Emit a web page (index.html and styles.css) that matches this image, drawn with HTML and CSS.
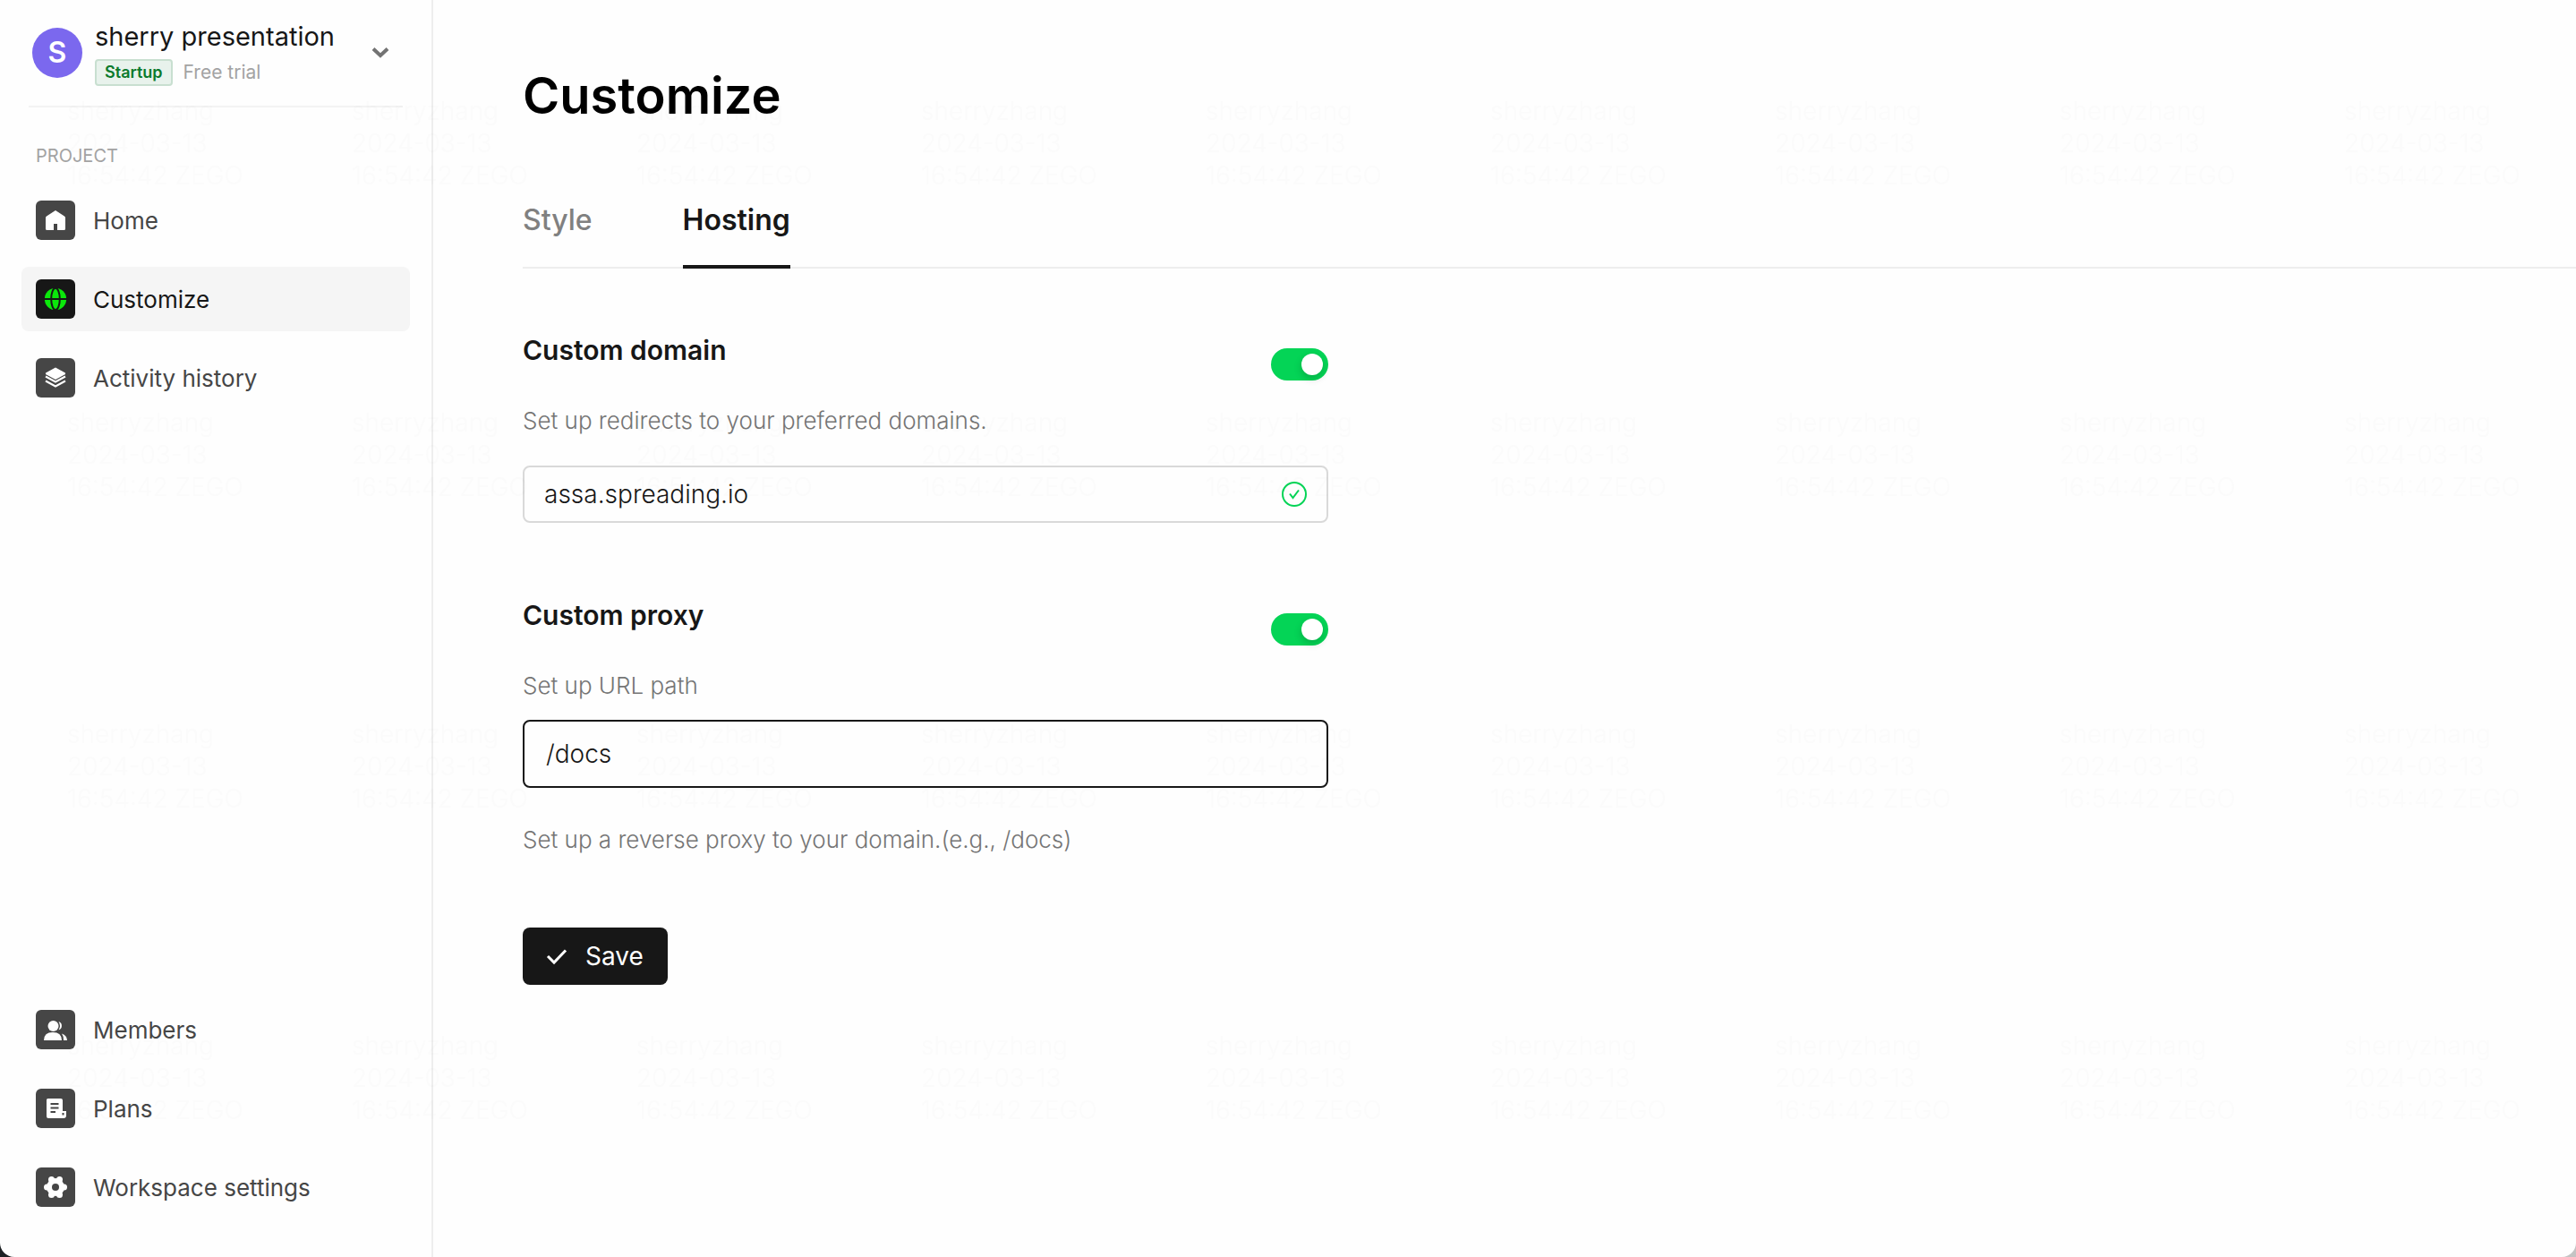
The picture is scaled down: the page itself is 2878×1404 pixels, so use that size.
FILE: index.html
```html
<!DOCTYPE html>
<html lang="en">
<head>
<meta charset="utf-8">
<title>Customize</title>
<link rel="stylesheet" href="styles.css">
</head>
<body>
<div class="app">
  <aside class="sidebar">
    <button class="workspace" type="button">
      <span class="avatar">S</span>
      <span class="workspace-info">
        <span class="workspace-name">sherry presentation</span>
        <span class="workspace-plan"><span class="badge">Startup</span><span class="trial">Free trial</span></span>
      </span>
      <svg class="chevron" viewBox="0 0 20 20" aria-hidden="true"><path d="M2 5.500 10 13 18 5.500"/></svg>
    </button>
    <p class="group-label">PROJECT</p>
    <nav class="nav">
      <a class="nav-item" href="#home">
        <svg class="tile" viewBox="0 0 44 44" aria-hidden="true"><path d="M22 11 32 17.500Q33 18.200 33 19.500V31.500Q33 33 31.500 33H24V26H20V33H12.500Q11 33 11 31.500V19.500Q11 18.200 12 17.500Z"/></svg>
        Home</a>
      <a class="nav-item active" href="#customize">
        <svg class="tile" viewBox="0 0 44 44" aria-hidden="true"><circle cx="22" cy="22" r="12.200"/><g class="cut"><ellipse cx="22" cy="22" rx="4.800" ry="12.200"/><path d="M9 22H35"/></g></svg>
        Customize</a>
      <a class="nav-item" href="#activity">
        <svg class="tile" viewBox="0 0 44 44" aria-hidden="true"><path d="M22 10.500 33 16.500V18L22 24 11 18V16.500Z"/><path class="line" d="M11 20.500 22 26.500 33 20.500M11 25.500 22 31.500 33 25.500"/></svg>
        Activity history</a>
    </nav>
    <nav class="nav nav-bottom">
      <a class="nav-item" href="#members">
        <svg class="tile" viewBox="0 0 44 44" aria-hidden="true"><circle cx="19.500" cy="18" r="6"/><path d="M9 34Q9 25 19 25 29 25 29 34ZM25.500 13A5 5 0 0 1 25.500 22.500 9 9 0 0 0 25.500 13ZM29 26.500Q35 28.500 35 34H31Q31.500 30 29 26.500Z"/></svg>
        Members</a>
      <a class="nav-item" href="#plans">
        <svg class="tile" viewBox="0 0 44 44" aria-hidden="true"><path d="M13.500 11H28Q30 11 30 13V25H34V30Q34 33 31 33H14Q12 33 12 31V12.500Q12 11 13.500 11Z"/><path class="cut" d="M16.500 17H25.500M16.500 21.500H25.500M16.500 26H22"/><path class="cut" d="M30.500 27V29.500"/></svg>
        Plans</a>
      <a class="nav-item" href="#settings">
        <svg class="tile" viewBox="0 0 44 44" aria-hidden="true"><circle cx="22" cy="22" r="10"/><g><circle cx="31.500" cy="22" r="3.500"/><circle cx="26.500" cy="13.500" r="3.500"/><circle cx="17.500" cy="13.500" r="3.500"/><circle cx="12.500" cy="22" r="3.500"/><circle cx="17.500" cy="30.500" r="3.500"/><circle cx="26.500" cy="30.500" r="3.500"/></g><circle class="hole" cx="22" cy="22" r="4"/></svg>
        Workspace settings</a>
    </nav>
  </aside>

  <main class="main">
    <h1 class="title">Customize</h1>
    <nav class="tabs">
      <a class="tab" href="#style">Style</a>
      <a class="tab current" href="#hosting">Hosting</a>
    </nav>
    <form class="form">
      <section class="section">
        <div class="section-head">
          <h2 class="section-title"><label for="domain-on">Custom domain</label></h2>
          <input class="switch" id="domain-on" type="checkbox" checked>
        </div>
        <label class="text" for="domain">Set up redirects to your preferred domains.</label>
        <div class="field domain-field">
          <input class="input" id="domain" type="text" value="assa.spreading.io">
          <svg class="valid" viewBox="0 0 28 28" aria-hidden="true"><circle cx="14" cy="14" r="13"/><path d="M9 13.500 12.500 18 19 9.500"/></svg>
        </div>
      </section>
      <section class="section">
        <div class="section-head">
          <h2 class="section-title"><label for="proxy-on">Custom proxy</label></h2>
          <input class="switch" id="proxy-on" type="checkbox" checked>
        </div>
        <label class="text" for="proxy">Set up URL path</label>
        <div class="field proxy-field">
          <input class="input" id="proxy" type="text" value="/docs">
        </div>
        <p class="text hint">Set up a reverse proxy to your domain.(e.g., /docs)</p>
      </section>
      <button class="save" type="button">
        <svg class="check" viewBox="0 0 24 24" aria-hidden="true"><path d="M2 12 9 19 22 5.500"/></svg>
        Save</button>
    </form>
  </main>

  <svg class="watermark" aria-hidden="true">
    <defs>
      <pattern id="mark" x="75" y="100" width="318" height="348" patternUnits="userSpaceOnUse">
        <text x="0" y="34">sherryzhang</text>
        <text x="0" y="70">2024-03-13</text>
        <text x="0" y="106">16:54:42 ZEGO</text>
      </pattern>
    </defs>
    <rect width="100%" height="100%" fill="url(#mark)"/>
  </svg>
</div>
</body>
</html>
```
FILE: styles.css
```css
* { box-sizing: border-box; }
html { background: linear-gradient(90deg, #1d2124 50%, #c4c4c4 50%); }
body {
  margin: 0;
  font-family: Inter, "Open Sans", sans-serif;
  font-size: 26px;
  color: #171717;
}
h1, h2, p { margin: 0; }
a { color: inherit; text-decoration: none; }
button, input { font: inherit; color: inherit; }

.app {
  position: relative;
  display: flex;
  min-height: 100vh;
  background: #fefefe;
  border-radius: 0 0 16px 16px;
  overflow: hidden;
}

/* Sidebar */
.sidebar {
  display: flex;
  flex-direction: column;
  flex: none;
  width: 484px;
  padding: 0 24px 42px;
  border-right: 2px solid #eee;
}
.workspace {
  display: flex;
  align-items: center;
  height: 120px;
  margin: 0 8px;
  padding: 0 15px 0 4px;
  border: 0;
  border-bottom: 2px solid #f3f3f3;
  background: none;
  text-align: left;
}
.avatar {
  flex: none;
  width: 56px;
  margin-right: 14px;
  border-radius: 50%;
  background: #7b68ee;
  color: #fff;
  font-size: 32px;
  font-weight: 600;
  line-height: 56px;
  text-align: center;
}
.workspace-info { flex: 1; padding-bottom: 2px; }
.workspace-name { display: block; font-size: 29px; line-height: 40px; }
.workspace-plan { display: flex; align-items: center; gap: 12px; margin-top: 5px; }
.badge {
  padding: 0 9px;
  border: 2px solid #c8dfd0;
  border-radius: 4px;
  background: #e8f2ec;
  color: #0b7a2c;
  font-size: 18px;
  font-weight: 600;
  line-height: 26px;
}
.trial { color: #a3a3a3; font-size: 21px; line-height: 30px; }
.chevron { flex: none; width: 20px; fill: none; stroke: #737373; stroke-width: 4; }
.group-label {
  margin: 39px 0 21px 16px;
  color: #a3a3a3;
  font-size: 20px;
  line-height: 30px;
}
.nav { display: flex; flex-direction: column; gap: 16px; }
.nav-bottom { margin-top: auto; }
.nav-item {
  display: flex;
  align-items: center;
  gap: 20px;
  height: 72px;
  padding: 0 16px;
  border-radius: 8px;
  color: #464646;
}
.nav-item.active { background: #f5f5f5; color: #171717; }
.tile { flex: none; width: 44px; border-radius: 6px; background: #464646; fill: #fff; }
.tile .cut { fill: none; stroke: #464646; stroke-width: 2; }
.tile .line { fill: none; stroke: #fff; stroke-width: 2; }
.tile .hole { fill: #464646; }
.active .tile { background: #171717; fill: #0be70b; }
.active .tile .cut { stroke: #171717; }

/* Content */
.main { flex: 1; min-width: 0; padding: 71px 0 0 100px; }
.title { color: #000; font-size: 56px; font-weight: 600; line-height: 72px; }
.tabs {
  display: flex;
  gap: 101px;
  margin-top: 83px;
  border-bottom: 2px solid #eee;
  font-size: 32px;
  font-weight: 500;
  line-height: 40px;
}
.tab { margin-bottom: -2px; padding-bottom: 30px; border-bottom: 4px solid transparent; color: #808080; }
.tab.current { border-color: #171717; color: #171717; font-weight: 600; }

.form { max-width: 900px; padding-top: 73px; }
.section + .section { margin-top: 85px; }
.section-head { display: flex; justify-content: space-between; height: 52px; }
.section-title { font-size: 30px; font-weight: 600; line-height: 36px; }
.switch {
  appearance: none;
  display: flex;
  align-items: center;
  justify-content: flex-end;
  align-self: flex-end;
  width: 64px;
  height: 36px;
  margin: 0;
  padding: 6px;
  border-radius: 18px;
  background: #04d456;
}
.switch::before {
  content: "";
  width: 24px;
  height: 24px;
  border-radius: 50%;
  background: #fff;
  box-shadow: 0 4px 8px rgba(0, 35, 11, 0.2);
}
.switch:not(:checked) { justify-content: flex-start; background: #bfbfbf; }
.text { display: block; margin-top: 25px; color: #757575; font-weight: 300; line-height: 40px; }
.field {
  display: flex;
  align-items: center;
  padding: 0 22px;
  border: 2px solid #d9d9d9;
  border-radius: 8px;
}
.domain-field { height: 64px; margin-top: 30px; }
.proxy-field { height: 76px; margin-top: 18px; padding: 0 24px; border-color: #171717; }
.input {
  flex: 1;
  min-width: 0;
  padding: 0;
  border: 0;
  outline: 0;
  background: none;
  font-size: 28px;
  font-weight: 300;
}
.valid { flex: none; width: 28px; fill: none; stroke: #04d456; stroke-width: 2; }
.hint { margin-top: 38px; }
.save {
  display: flex;
  align-items: center;
  gap: 20px;
  height: 64px;
  margin-top: 78px;
  padding: 0 27px 0 26px;
  border: 0;
  border-radius: 8px;
  background: #171717;
  color: #fff;
  font-size: 28px;
}
.check { width: 24px; fill: none; stroke: #fff; stroke-width: 3; }

/* Viewer stamp laid over the whole window */
.watermark {
  position: absolute;
  inset: 0;
  width: 100%;
  height: 100%;
  fill: rgba(0, 0, 0, 0.01);
  font-size: 28px;
  font-weight: 300;
  pointer-events: none;
}
```
